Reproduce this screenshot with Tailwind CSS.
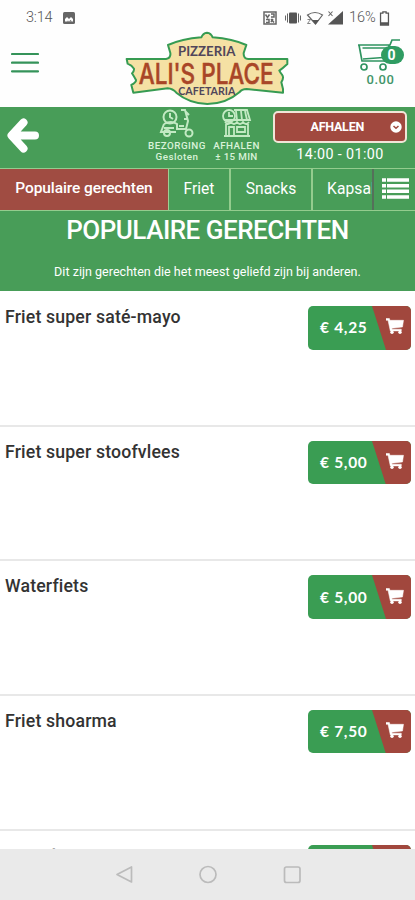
<!DOCTYPE html>
<html lang="nl">
<head>
<meta charset="utf-8">
<title>Ali's Place</title>
<script src="https://cdn.jsdelivr.net/npm/@tailwindcss/browser@4"></script>
</head>
<body class="bg-white">
<svg class="hidden">
  <symbol id="cart" viewBox="0 0 18 16"><path d="M0 .5h3.400l.5 1.800H17.500L16.500 9 5.800 10.200l.3 1h9.200v1.700H4.300L2 2.300H0z" fill="#fff" stroke="#fff" stroke-width=".5"/><circle cx="6" cy="14.200" r="1.700" fill="#fff"/><circle cx="14" cy="14.200" r="1.700" fill="#fff"/></symbol>
</svg>
<div class="w-[415px] h-[900px] overflow-hidden flex flex-col font-['Roboto',sans-serif]">
  <header class="h-[107px] shrink-0 flex flex-col bg-[#fefefe]">
    <div class="h-9 shrink-0 flex items-center justify-between pl-[26px] pr-[25px] text-[#777]">
      <div class="flex items-center gap-[9px]">
        <span class="text-[14.5px] leading-4 font-light text-[#555] w-[28px] tracking-[-0.2px]">3:14</span>
        <svg width="12" height="12" viewBox="0 0 12 12"><rect width="12" height="12" rx="1.500" fill="#666"/><path d="M2 9.500V7l2-2 2 2 2-2 2 2v2.500z" fill="#fff"/><path d="M4 9.500l1-1 1 1 1.500-1.500L9 9.500z" fill="#666"/></svg>
      </div>
      <div class="flex items-center">
        <svg width="87" height="18" viewBox="2 0 87 18" fill="none" stroke="#666">
          <rect x="4" y="3" width="12" height="12" stroke-width="1.500"/><path d="M5.500 5.500l2 3 2-3M11 5h3v3h-3M6 10.500h3v3H6M11 10l3 3.500M11 13l2-3" stroke-width="1.500"/>
          <rect x="29" y="3.500" width="8" height="11" rx="1" fill="#555" stroke="none"/><path d="M27.500 4.500v9M38.500 4.500v9M25.500 6.500v5M40.500 6.500v5" stroke-width="1"/>
          <path d="M47.500 6q7.500-5 15 0L55.500 15z" stroke-width="1.200"/><path d="M52 11h7l-3.500 4.500z" fill="#555" stroke="none"/><path d="M47.500 10.500h3l-3 4h3" stroke-width=".8"/>
          <path d="M83 2v13.500H68z" fill="#555" stroke="none"/><path d="M68.500 2.500l4 4.500M72.500 2.500l-4 4.500" stroke-width="1.100"/>
        </svg>
        <span class="text-[14.500px] leading-4 font-light text-[#555] w-[28px] tracking-[-0.100px]">16%</span>
        <svg width="11" height="15" viewBox="0 0 10 14" class="ml-[2px]"><path d="M3.500 2V.8h3V2h2.200v11.200H1.300V2z" fill="none" stroke="#555" stroke-width="1.200"/><path d="M1.500 10.500h7V13h-7z" fill="#555"/></svg>
      </div>
    </div>
    <div class="flex-1 relative flex justify-between pl-[11px] pr-[9px]">
      <svg class="mt-[16px]" width="28" height="22" viewBox="0 0 28 22" stroke="#35935a" stroke-width="2.200" stroke-linecap="round"><path d="M1 2h26M1 10.700h26M1 19.300h26"/></svg>
      <svg class="absolute left-[120px] top-[-11px]" width="175" height="82" viewBox="0 0 525 246">
        <path d="M20 102H138Q153 100 151 84L144 60Q185 42 244 37Q249 24 261 23Q273 24 278 37Q338 42 379 60L371 84Q370 101 385 102H502V117Q488 130 478 137Q482 145 486 149Q493 158 484 172L489 192V203L380 192Q365 192 358 202Q318 237 262 237Q207 235 169 203Q158 191 143 190L40 203L34 180Q49 172 48 165Q43 156 36 145Q43 138 42 131Q36 121 23 116z" fill="#f5e1a4" stroke="#369b52" stroke-width="6" stroke-linejoin="round"/>
        <text x="174" y="92" font-family="Lato" font-size="38" font-weight="700" fill="#51465a" textLength="172" lengthAdjust="spacingAndGlyphs">PIZZERIA</text>
        <text x="56" y="177" font-family="Inter" font-size="84" font-weight="500" fill="#a94627" stroke="#a94627" stroke-width="1.500" textLength="405" lengthAdjust="spacingAndGlyphs">ALI'S PLACE</text>
        <text x="175" y="210" font-family="Lato" font-size="33" font-weight="700" fill="#51465a" textLength="171" lengthAdjust="spacingAndGlyphs">CAFETARIA</text>
      </svg>
      <div class="w-[52px] flex flex-col items-center">
        <svg width="52" height="36" viewBox="0 0 52 36" fill="none" stroke="#2f9460" stroke-width="1.700">
          <path d="M4 9H36L38 4H46M5 9l3 16h29M8.500 12h26M9 23l27-2M35 9v16"/><circle cx="10" cy="31" r="3"/><circle cx="29" cy="31" r="3"/>
          <rect x="27" y="10" width="23" height="18" rx="9" fill="#2f9c62" stroke="none"/><text x="37.500" y="24" font-family="Roboto" font-size="14" font-weight="700" fill="#fff" stroke="none" text-anchor="middle">0</text>
        </svg>
        <span class="text-[13px] leading-[14px] font-medium text-[#43956a] mt-[1px] ml-[1px] tracking-[0.500px]">0.00</span>
      </div>
    </div>
  </header>

  <section class="h-[61px] shrink-0 bg-[#489d58] flex text-white">
    <div class="w-[146px] pt-[11px] pl-[7px]">
      <svg width="32" height="35" viewBox="0 0 32 35"><path d="M16.500 4.500L4.500 17.500l12 13M6 17.500h22" fill="none" stroke="#fff" stroke-width="8" stroke-linejoin="round" stroke-linecap="round"/></svg>
    </div>
    <div class="w-[62px] flex flex-col items-center text-[9.800px] leading-[10.500px] font-medium text-[#d9f2d9] whitespace-nowrap">
      <svg width="36" height="34" viewBox="0 0 36 34" fill="none" stroke="#c3eac3" stroke-width="2"><circle cx="11" cy="10" r="6.500"/><path d="M11 6v4l3 2M5 17q7-4 13 0v5H27L29 14 26 3h-4M27 5l3 3M5 17l-3 8h15M5 21h10M20 19h5M25 12h4"/><circle cx="8" cy="26" r="3"/><circle cx="30" cy="26" r="3.500"/></svg>
      <span class="tracking-[0.500px]">BEZORGING</span><span class="tracking-[0.500px]">Gesloten</span>
    </div>
    <div class="w-[57px] flex flex-col items-center text-[9.800px] leading-[10.500px] font-medium text-[#d9f2d9] whitespace-nowrap">
      <svg width="36" height="34" viewBox="0 0 36 34" fill="none" stroke="#c3eac3" stroke-width="1.800"><circle cx="10" cy="9" r="6"/><path d="M10 5v4h4M15 3H28L31 13H5M17 4l1 9M22 4l1 9M26 4l2 9M6 15q3 4 6 0 3 4 6 0 3 4 6 0 3 4 6 0M7 17V29H29V17M10 28V20h5v8M18 20h8v5H18zM5 29H31"/></svg>
      <span class="tracking-[0.500px]">AFHALEN</span><span class="tracking-[0.350px]">± 15 MIN</span>
    </div>
    <div class="w-[150px] pt-[4px] pl-[8px] flex flex-col">
      <div class="w-[134px] h-[32px] shrink-0 rounded-[5px] border-2 border-[#f1e5d8] bg-[#a1493f] flex items-center justify-end pr-[3px] gap-[26px]">
        <span class="text-[12.500px] font-bold tracking-[-0.250px]">AFHALEN</span>
        <svg width="12" height="12" viewBox="0 0 12 12"><circle cx="6" cy="6" r="5.700" fill="#fff"/><path d="M3.500 5L6 7.300 8.500 5" fill="none" stroke="#a1493f" stroke-width="1.500"/></svg>
      </div>
      <span class="mt-[1px] w-[134px] text-center text-[14.300px] leading-5 tracking-[0.400px]">14:00 - 01:00</span>
    </div>
  </section>

  <nav class="h-[43px] shrink-0 bg-[#489d58] border-y border-[#94cc8e] flex text-white text-[15.600px]">
    <div class="w-[169px] shrink-0 bg-[#a04c42] border-r border-[#9fcf93] flex items-center justify-center font-medium tracking-[-0.100px] text-[15.500px] pb-px">Populaire gerechten</div>
    <div class="w-[62px] shrink-0 border-r-2 border-[#94cc8e] flex items-center justify-center">Friet</div>
    <div class="w-[82px] shrink-0 border-r-2 border-[#94cc8e] flex items-center justify-center">Snacks</div>
    <div class="w-[59px] shrink-0 overflow-hidden flex items-center pl-[14px] tracking-[0.100px]">Kapsalon</div>
    <div class="w-[43px] shrink-0 border-l-2 border-[#55705a] flex items-center justify-center">
      <svg width="27" height="21" viewBox="0 0 27 21" stroke="#fff" stroke-width="3.600" class="mb-[3px] ml-[1px]"><path d="M0 2h4M5 2h22M0 7.700h4M5 7.700h22M0 13.300h4M5 13.300h22M0 19h4M5 19h22"/></svg>
    </div>
  </nav>

  <section class="h-[80px] shrink-0 bg-[#489d58] flex flex-col items-center text-white">
    <h1 class="mt-[3px] text-[26px] leading-[32px] font-medium tracking-[-0.500px] whitespace-nowrap">POPULAIRE GERECHTEN</h1>
    <p class="mt-[18px] text-[12.500px] leading-4 tracking-[0.030px] whitespace-nowrap">Dit zijn gerechten die het meest geliefd zijn bij anderen.</p>
  </section>

  <main class="h-[558px] shrink-0 overflow-hidden text-[#333]" id="list"></main>

  <footer class="h-[51px] shrink-0 bg-[#eaeaea] flex justify-center">
    <svg width="190" height="51" viewBox="0 0 190 51" fill="none" stroke="#bbb" stroke-width="1.700" stroke-linejoin="round"><path d="M18.500 18v15L4 25.500z"/><circle cx="95" cy="25.500" r="8"/><rect x="171.500" y="18" width="15.500" height="15.500" rx="2"/></svg>
  </footer>
</div>
<script>
  const dishes = [['Friet super saté-mayo','€ 4,25'],['Friet super stoofvlees','€ 5,00'],['Waterfiets','€ 5,00'],['Friet shoarma','€ 7,50'],['Friet döner','€ 7,50']];
  document.getElementById('list').innerHTML = dishes.map(([name, price], i) => `
    <article class="flex justify-between items-start pl-[5px] pr-[4px] ${i ? 'h-[134.600px] border-t-2 border-[#e8e8e8] pt-[14px]' : 'h-[133.800px] pt-[15px]'}">
      <h2 class="text-[17.700px] leading-[22px] font-medium tracking-[0.160px] ${i === 4 ? 'text-[#aaa]' : ''}">${name}</h2>
      <div class="relative w-[103px] h-[43.500px] rounded-[5px] overflow-hidden bg-[#3a9d53] flex items-center text-white">
        <svg class="absolute inset-0" width="103" height="44" viewBox="0 0 103 44"><path d="M64 0H103V44H78z" fill="#a1473d"/></svg>
        <span class="relative pl-[12px] w-[78px] shrink-0 font-['Lato',sans-serif] font-bold text-[15.500px] tracking-[0.700px] whitespace-nowrap">${price}</span>
        <svg class="relative mb-[3px]" width="18" height="16"><use href="#cart"/></svg>
      </div>
    </article>`).join('');
</script>
</body>
</html>
